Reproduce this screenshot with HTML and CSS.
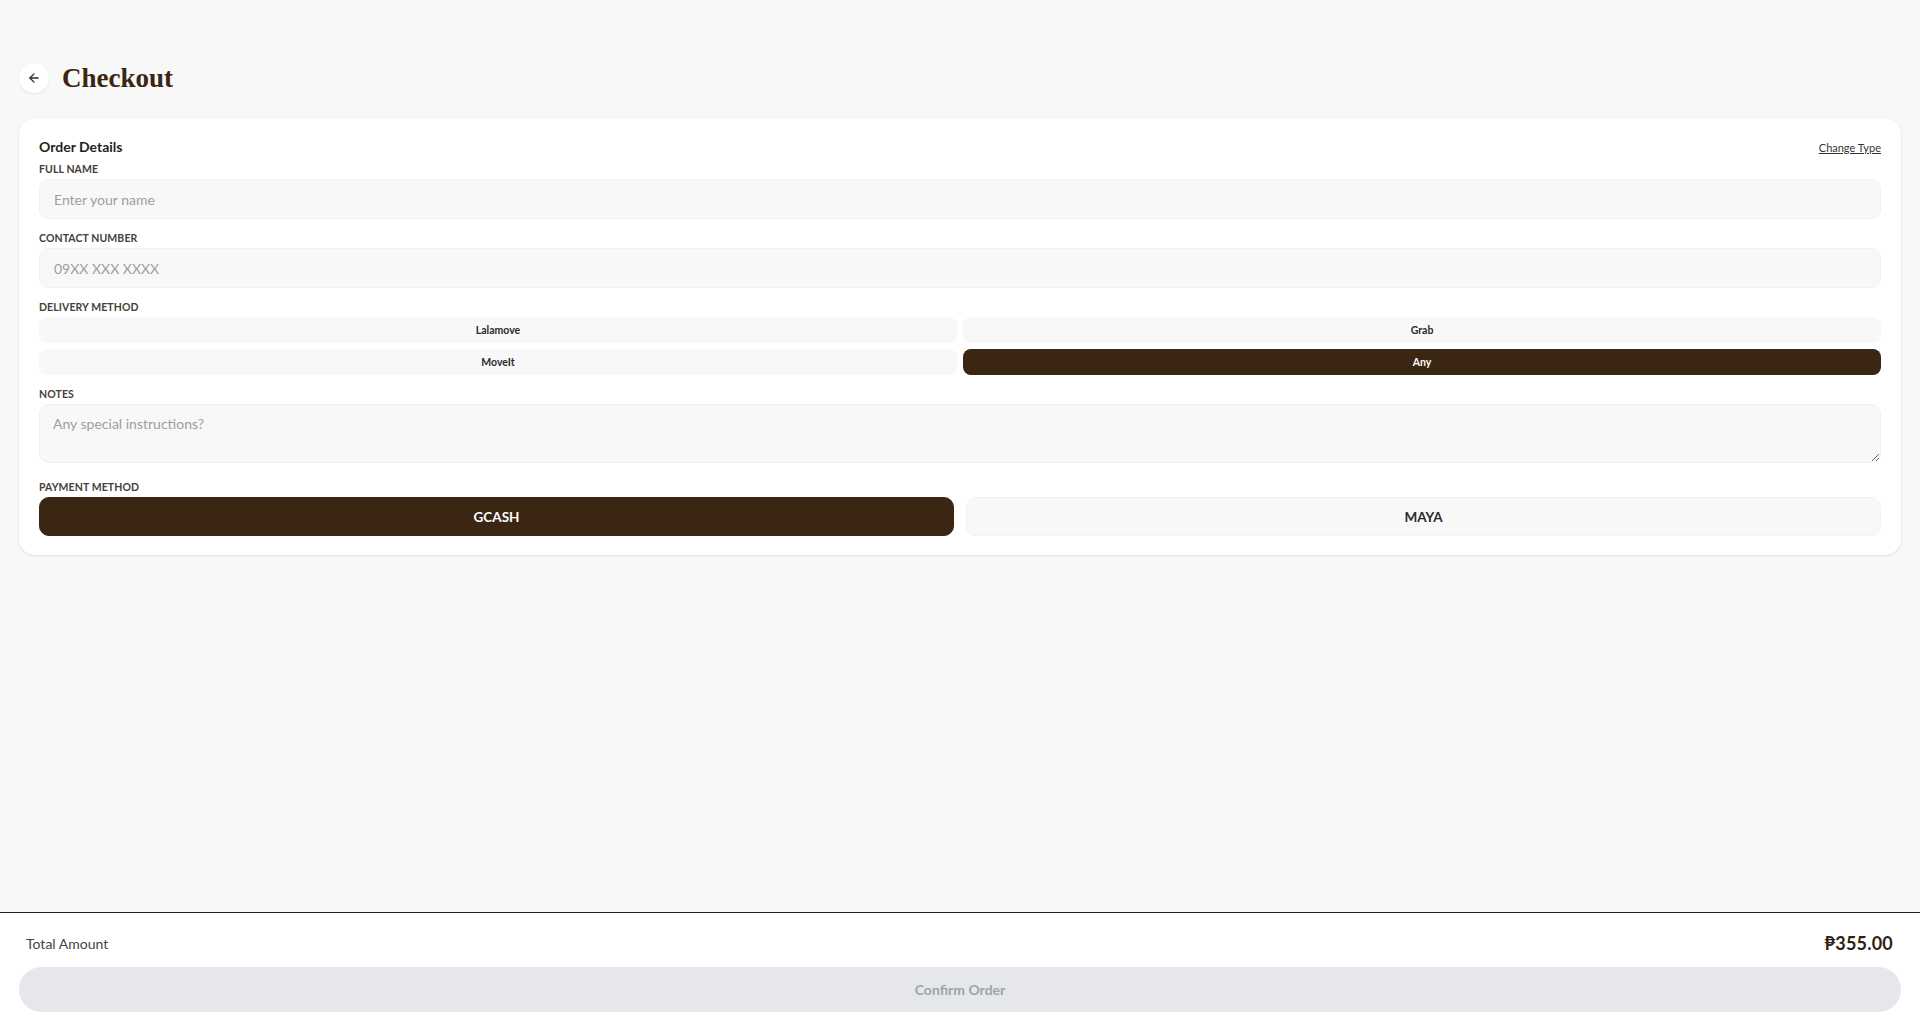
FILE: index.html
```html
<!DOCTYPE html>
<html lang="en">
<head>
<meta charset="utf-8">
<title>Checkout</title>
<link rel="stylesheet" href="styles.css">
</head>
<body>
<div class="page">
  <main class="main">
    <header class="header">
      <button class="back" type="button" aria-label="Back">
        <svg width="14" height="14" viewBox="0 0 24 24" fill="none" stroke="currentColor" stroke-width="2.2" stroke-linecap="round" stroke-linejoin="round"><path d="m12 19-7-7 7-7"/><path d="M19 12H5"/></svg>
      </button>
      <h1 class="title">Checkout</h1>
    </header>

    <section class="card">
      <div class="card-head">
        <h2 class="card-title">Order Details</h2>
        <a class="change" href="#">Change Type</a>
      </div>

      <div class="group">
        <label class="label">FULL NAME</label>
        <input class="input" type="text" placeholder="Enter your name">
      </div>

      <div class="group">
        <label class="label">CONTACT NUMBER</label>
        <input class="input" type="text" placeholder="09XX XXX XXXX">
      </div>

      <div class="group">
        <label class="label">DELIVERY METHOD</label>
        <div class="delivery">
          <button class="opt" type="button">Lalamove</button>
          <button class="opt" type="button">Grab</button>
          <button class="opt" type="button">MoveIt</button>
          <button class="opt opt-active" type="button">Any</button>
        </div>
      </div>

      <div class="group group-notes">
        <label class="label">NOTES</label>
        <textarea class="textarea" placeholder="Any special instructions?"></textarea>
      </div>

      <div class="group">
        <label class="label">PAYMENT METHOD</label>
        <div class="payment">
          <button class="pay pay-active" type="button">GCASH</button>
          <button class="pay" type="button">MAYA</button>
        </div>
      </div>
    </section>
  </main>

  <footer class="footer">
    <div class="total-row">
      <span class="total-label">Total Amount</span>
      <span class="total-value">₱355.00</span>
    </div>
    <button class="confirm" type="button" disabled>Confirm Order</button>
  </footer>
</div>
</body>
</html>
```

FILE: styles.css
```css
* { box-sizing: border-box; }

html, body {
  margin: 0;
  padding: 0;
  height: 100%;
}

body {
  background: #f8f8f8;
  font-family: Lato, "Noto Sans", "DejaVu Sans", sans-serif;
  color: #1f1f1f;
}

.page {
  min-height: 100vh;
  display: flex;
  flex-direction: column;
}

.main {
  flex: 1;
  padding: 63px 19px 0;
}

.header {
  display: flex;
  align-items: center;
  gap: 13px;
  height: 30px;
}

.back {
  width: 30px;
  height: 30px;
  border-radius: 50%;
  border: none;
  background: #ffffff;
  box-shadow: 0 1px 3px rgba(0, 0, 0, 0.08);
  color: #2b2b2b;
  display: flex;
  align-items: center;
  justify-content: center;
  padding: 0;
  cursor: pointer;
}

.title {
  margin: 0;
  font-family: "Liberation Serif", "DejaVu Serif", serif;
  font-weight: 700;
  font-size: 27px;
  line-height: 30px;
  color: #3a2613;
}

.card {
  margin-top: 25px;
  background: #ffffff;
  border-radius: 16px;
  padding: 19px 20px 19px;
  box-shadow: 0 1px 3px rgba(0, 0, 0, 0.09), 0 0 0 1px rgba(0, 0, 0, 0.015);
  display: flex;
  flex-direction: column;
  gap: 12px;
}

.card-head {
  display: flex;
  align-items: center;
  justify-content: space-between;
  height: 20px;
  margin-bottom: -7px;
}

.card-title {
  margin: 0;
  font-size: 14px;
  font-weight: 700;
  line-height: 20px;
  color: #1f1f1f;
}

.change {
  font-size: 11px;
  color: #333333;
  text-decoration: underline;
}

.group {
  display: flex;
  flex-direction: column;
  gap: 3px;
}

.group-notes {
  margin-bottom: 5px;
}

.label {
  font-size: 10.5px;
  font-weight: 700;
  line-height: 14px;
  color: #463e3a;
  letter-spacing: 0.1px;
}

.input {
  height: 40px;
  width: 100%;
  border: 1px solid #f0f0f0;
  border-radius: 10px;
  background: #f8f8f8;
  padding: 0 14px;
  font-family: Lato, "Noto Sans", sans-serif;
  font-size: 14px;
  color: #222222;
  outline: none;
}

.input::placeholder,
.textarea::placeholder {
  color: #9e9e9e;
}

.delivery {
  display: grid;
  grid-template-columns: 1fr 1fr;
  gap: 6px;
}

.opt {
  height: 26px;
  border: none;
  border-radius: 8px;
  background: #f8f8f8;
  font-family: Lato, "Noto Sans", sans-serif;
  font-size: 10.5px;
  font-weight: 700;
  color: #2a2a2a;
  cursor: pointer;
}

.opt-active {
  background: #3a2613;
  color: #ffffff;
}

.textarea {
  display: block;
  width: 100%;
  height: 59px;
  border: 1px solid #f0f0f0;
  border-radius: 10px;
  background: #f8f8f8;
  padding: 10px 13px;
  font-family: Lato, "Noto Sans", sans-serif;
  font-size: 14px;
  color: #222222;
  outline: none;
  resize: vertical;
}

.payment {
  display: grid;
  grid-template-columns: 1fr 1fr;
  gap: 12px;
}

.pay {
  height: 39px;
  border: 1px solid #f3f3f3;
  border-radius: 10px;
  background: #f8f8f8;
  font-family: Lato, "Noto Sans", sans-serif;
  font-size: 13.5px;
  font-weight: 700;
  color: #2a2a2a;
  cursor: pointer;
}

.pay-active {
  background: #3a2613;
  border-color: #3a2613;
  color: #ffffff;
}

.footer {
  background: #ffffff;
  border-top: 1px solid #1f1f1f;
  padding: 20px 19px 19px;
  display: flex;
  flex-direction: column;
  gap: 14px;
}

.total-row {
  display: flex;
  align-items: center;
  justify-content: space-between;
  height: 20px;
  padding: 0 8px 0 7px;
}

.total-label {
  font-size: 14px;
  color: #444444;
}

.total-value {
  font-size: 18px;
  font-weight: 700;
  color: #2e2212;
  letter-spacing: 0.2px;
}

.confirm {
  height: 45px;
  width: 100%;
  border: none;
  border-radius: 23px;
  background: #e5e7eb;
  color: #9ca3af;
  font-family: Lato, "Noto Sans", sans-serif;
  font-size: 14px;
  font-weight: 700;
}
```
